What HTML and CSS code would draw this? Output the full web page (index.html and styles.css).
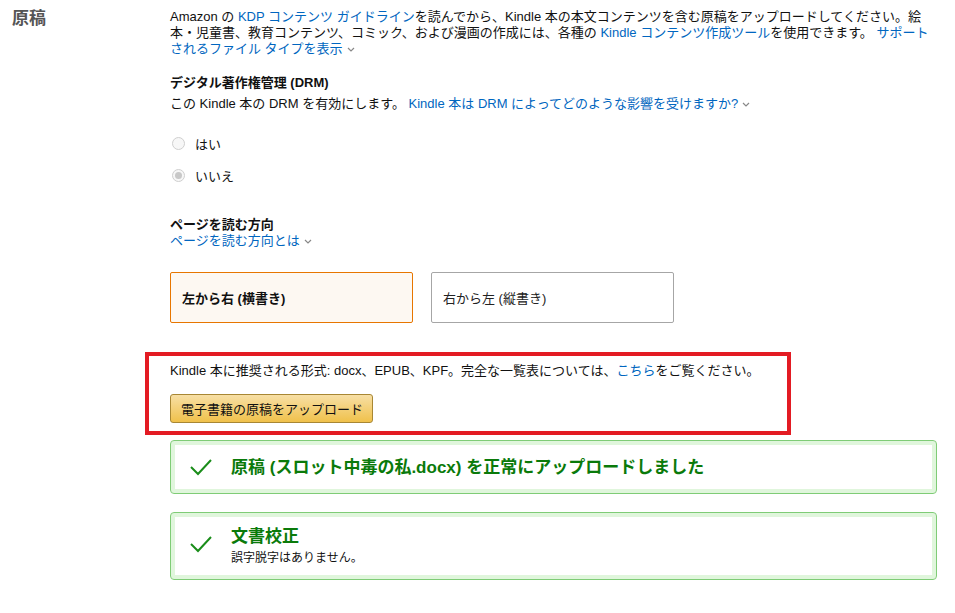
FILE: index.html
```html
<!DOCTYPE html>
<html lang="ja">
<head>
<meta charset="utf-8">
<title>原稿</title>
<link rel="stylesheet" href="styles.css">
</head>
<body>
<div class="page">
  <div class="label">原稿</div>
  <div class="content">
    <p class="intro">Amazon の <a href="#">KDP コンテンツ ガイドライン</a>を読んでから、Kindle 本の本文コンテンツを含む原稿をアップロードしてください。絵本・児童書、教育コンテンツ、コミック、および漫画の作成には、各種の <a href="#">Kindle コンテンツ作成ツール</a>を使用できます。 <a href="#">サポートされるファイル タイプを表示<svg class="chev" viewBox="0 0 8 5" width="8" height="5"><polyline points="1,1 4,4 7,1"/></svg></a></p>

    <h3 class="subhead drm-head">デジタル著作権管理 (DRM)</h3>
    <p class="line">この Kindle 本の DRM を有効にします。 <a href="#">Kindle 本は DRM によってどのような影響を受けますか?<svg class="chev" viewBox="0 0 8 5" width="8" height="5"><polyline points="1,1 4,4 7,1"/></svg></a></p>

    <div class="radios">
      <label class="radio"><span class="dot"></span>はい</label>
      <label class="radio"><span class="dot checked"></span>いいえ</label>
    </div>

    <h3 class="subhead dir-head">ページを読む方向</h3>
    <p class="line"><a href="#">ページを読む方向とは<svg class="chev" viewBox="0 0 8 5" width="8" height="5"><polyline points="1,1 4,4 7,1"/></svg></a></p>

    <div class="tiles">
      <div class="tile selected">左から右 (横書き)</div>
      <div class="tile">右から左 (縦書き)</div>
    </div>

    <div class="highlight">
      <p class="line">Kindle 本に推奨される形式: docx、EPUB、KPF。完全な一覧表については、<a href="#">こちら</a>をご覧ください。</p>
      <button class="upload">電子書籍の原稿をアップロード</button>
    </div>

    <div class="alert first">
      <svg class="check" viewBox="0 0 24 18" width="24" height="18"><polyline points="2,9 9,16 22,2"/></svg>
      <div class="alert-body">
        <div class="alert-title">原稿 (スロット中毒の私.docx) を正常にアップロードしました</div>
      </div>
    </div>

    <div class="alert second">
      <svg class="check" viewBox="0 0 24 18" width="24" height="18"><polyline points="2,9 9,16 22,2"/></svg>
      <div class="alert-body">
        <div class="alert-title">文書校正</div>
        <div class="alert-text">誤字脱字はありません。</div>
      </div>
    </div>
  </div>
</div>
</body>
</html>
```

FILE: styles.css
```css
html, body {
  margin: 0;
  padding: 0;
  background: #fff;
}
body {
  font-family: "Liberation Sans", Arial, "Noto Sans CJK JP", sans-serif;
  font-size: 13px;
  color: #111;
}
a {
  color: #0066c0;
  text-decoration: none;
}
.chev {
  margin-left: 4px;
  vertical-align: middle;
  fill: none;
  stroke: #888;
  stroke-width: 1.2;
}
.page {
  display: grid;
  grid-template-columns: 170px 765px;
}
.label {
  padding: 9px 0 0 12px;
  font-size: 17px;
  font-weight: bold;
  color: #555;
  line-height: 20px;
}
.content {
  padding-top: 9px;
}
.intro {
  margin: 0;
  line-height: 16px;
}
.subhead {
  margin: 0;
  font-size: 13px;
  font-weight: bold;
  line-height: 16px;
}
.drm-head {
  margin-top: 18px;
}
.line {
  margin: 0;
  line-height: 16px;
}
.drm-head + .line {
  margin-top: 5px;
}
.radios {
  margin-top: 21px;
  display: flex;
  flex-direction: column;
  gap: 12px;
}
.radio {
  display: flex;
  align-items: center;
  height: 20px;
  gap: 10px;
  padding-left: 2px;
  color: #111;
}
.dot {
  width: 11px;
  height: 11px;
  border: 1px solid #cfcfcf;
  border-radius: 50%;
  background: #f7f7f7;
  display: flex;
  align-items: center;
  justify-content: center;
}
.dot.checked::after {
  content: "";
  width: 7px;
  height: 7px;
  border-radius: 50%;
  background: #c8c8c8;
}
.dir-head {
  margin-top: 32px;
}
.tiles {
  margin-top: 23px;
  display: flex;
  gap: 18px;
}
.tile {
  width: 243px;
  height: 51px;
  box-sizing: border-box;
  border: 1px solid #a6a6a6;
  border-radius: 2px;
  padding: 0 11px;
  display: flex;
  align-items: center;
  color: #222;
}
.tile.selected {
  border-color: #e77600;
  background: #fdf8f2;
  font-weight: bold;
  color: #111;
}
.highlight {
  margin-top: 29px;
  margin-left: -25px;
  width: 646px;
  box-sizing: border-box;
  border: 4px solid #e31b23;
  padding: 7px 21px 8px;
}
.upload {
  margin-top: 15px;
  display: block;
  height: 29px;
  width: 203px;
  box-sizing: border-box;
  border: 1px solid #a88734;
  border-radius: 3px;
  background: linear-gradient(to bottom, #f7dfa5, #f0c14b);
  font-family: inherit;
  font-size: 13px;
  color: #111;
  padding: 0 10px;
  white-space: nowrap;
  text-align: left;
}
.alert {
  width: 767px;
  box-sizing: border-box;
  border: 1px solid #7fcc76;
  border-radius: 4px;
  box-shadow: inset 0 0 0 4px #e0f6dc;
  display: flex;
  align-items: flex-start;
  padding: 0 18px;
}
.alert.first {
  margin-top: 5px;
  height: 54px;
  align-items: center;
}
.alert.second {
  margin-top: 18px;
  height: 68px;
  padding-top: 13px;
}
.check {
  flex: none;
  fill: none;
  stroke: #1a8d1a;
  stroke-width: 2;
  margin-right: 18px;
}
.second .check {
  margin-top: 9px;
}
.alert-title {
  font-size: 17px;
  font-weight: bold;
  color: #0a7a0a;
  line-height: 21px;
}
.alert-text {
  margin-top: 3px;
  font-size: 12px;
  line-height: 16px;
  color: #111;
}
```
